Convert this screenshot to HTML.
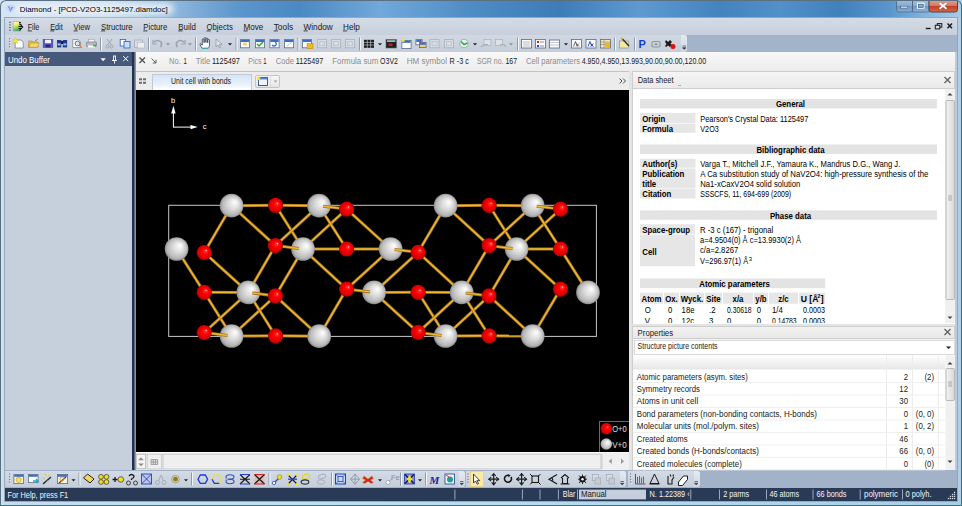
<!DOCTYPE html>
<html><head><meta charset="utf-8">
<style>
*{margin:0;padding:0;box-sizing:border-box}
html,body{width:962px;height:506px;overflow:hidden;background:#c4d8ec;font-family:"Liberation Sans",sans-serif;font-size:9px;color:#000;position:relative}
.a{position:absolute}
#frame{left:0;top:0;width:962px;height:506px;background:linear-gradient(90deg,#cfe0f0 0,#c2d7ec 40%,#b4cde6 100%)}
#fbot{left:0;top:500px;width:962px;height:6px;background:linear-gradient(90deg,#c6dcef,#bfe0f0 30%,#b4d8ec 70%,#a6cfe6)}
#fborder{left:0;top:0;width:962px;height:506px;border:1px solid #5a7080;border-radius:6px 6px 0 0;border-right-color:#3a7080;border-bottom-color:#3a7080}
#title{left:0;top:0;width:962px;height:18px;background:linear-gradient(90deg,#d6e5f3 0,#cadcee 110px,#8ab4dc 180px,#5b95cb 240px,#4a89c2 300px,#72a8da 380px,#4f8cc4 470px,#3d7cb8 560px,#5e9ad0 640px,#4383bf 720px,#5290c8 780px,#4080bc 840px,#5a96cc 890px,#88b8e0 930px,#a8cce8 962px)}
#titletop{left:0;top:0;width:962px;height:1px;background:#5a6a7a}
#client{left:4px;top:17px;width:954px;height:485px;background:#95a5ba}
#menubar{left:5px;top:18px;width:952px;height:17px;background:linear-gradient(#d3dbe6,#c6cfdb)}
#tbrow{left:5px;top:35px;width:952px;height:17px;background:#a3b3c9}
#tb1{left:5px;top:35px;width:682px;height:17px;background:linear-gradient(#d2d9e3,#c4cdd9);border-radius:0 3px 3px 0}
#tb1end{left:681px;top:35px;width:6px;height:17px;background:linear-gradient(#e6ebf2,#cdd6e1);border-radius:0 3px 3px 0}
#undoh{left:5px;top:52px;width:127px;height:14px;background:#46597a}
#undob{left:5px;top:66px;width:127px;height:404px;background:#c6d0dd}
#split1{left:132px;top:52px;width:4px;height:418px;background:linear-gradient(90deg,#223050 0,#243252 50%,#5a6880 62%,#a4a8b2 100%)}
#info{left:136px;top:52px;width:821px;height:20px;background:linear-gradient(#f8f8f8,#ececec);border-bottom:1px solid #c4c4c4}
#tabbar{left:136px;top:72px;width:493px;height:18px;background:#ececec}
#tab{left:151.5px;top:73.5px;width:100px;height:16.5px;background:linear-gradient(#d3e4f8,#e8f1fb 60%,#ffffff);border:1px solid #c0cad8;border-bottom:none}
#tab2{left:255px;top:74.5px;width:25px;height:13.5px;background:linear-gradient(#f6f6f6,#e6e6e6);border:1px solid #c4c4c4;border-radius:2px}
#canvas{left:136px;top:90px;width:493px;height:362px;background:#000;overflow:hidden}
#hscroll{left:136px;top:452px;width:493px;height:18px;background:#f0f0f0;border-top:1px solid #fafafa}
#split2{left:629px;top:71px;width:3px;height:399px;background:#e4e4e4}
#dsh{left:632px;top:71px;width:323px;height:18px;background:linear-gradient(#f5f5f5,#eaeaea);border:1px solid #cdcdcd}
#dsc{left:632px;top:89px;width:323px;height:235px;background:#fff;border-left:1px solid #cdcdcd}
#dsscroll{left:945px;top:89px;width:10px;height:234px;background:#f2f2f2}
#propsep{left:632px;top:324px;width:323px;height:2px;background:#e4e4e4}
#proph{left:632px;top:326px;width:323px;height:13px;background:linear-gradient(#f2f2f2,#e8e8e8);border:1px solid #cdcdcd}
#propdd{left:632px;top:339px;width:323px;height:16px;background:#f4f4f4;border-left:1px solid #cdcdcd}
#propddbox{left:634px;top:339.5px;width:321px;height:15px;background:#fff;border:1px solid #dadada}
#proptab{left:632px;top:355px;width:323px;height:115px;background:#fff;border-left:1px solid #cdcdcd}
#rightedge{left:955px;top:52px;width:2px;height:418px;background:#b8cde2}
#btbrow{left:5px;top:470px;width:952px;height:18px;background:#a2b2c8}
.tbar{background:linear-gradient(#d4dbe5,#c4cdd9);border-radius:0 3px 3px 0}
.tend{background:linear-gradient(#e6ebf2,#cdd6e1);border-radius:0 3px 3px 0}
#btb1{left:5px;top:470.5px;width:459.5px;height:16.5px}
#btb1e{left:458.5px;top:470.5px;width:6px;height:16.5px}
#btb4{left:466px;top:470.5px;width:159.5px;height:16.5px}
#btb4e{left:619.5px;top:470.5px;width:6px;height:16.5px}
#btb5{left:628px;top:470.5px;width:72px;height:16.5px}
#btb5e{left:694px;top:470.5px;width:6px;height:16.5px}
#status{left:5px;top:488px;width:952px;height:13px;background:#293a57}
</style></head><body>
<div class="a" id="frame"></div><div class="a" id="fbot"></div>
<div class="a" id="title"></div>
<div class="a" id="client"></div>
<div class="a" id="menubar"></div>
<div class="a" id="tbrow"></div>
<div class="a" id="tb1"></div>
<div class="a" id="tb1end"></div>
<div class="a" id="undoh"></div>
<div class="a" id="undob"></div>
<div class="a" id="split1"></div>
<div class="a" id="info"></div>
<div class="a" id="tabbar"></div>
<div class="a" id="tab"></div>
<div class="a" id="tab2"></div>
<div class="a" id="canvas"><svg class="a" style="left:0;top:0" width="493" height="362" viewBox="0 0 493 362">
<defs><radialGradient id="gv" cx="0.5" cy="0.5" r="0.5" fx="0.66" fy="0.34"><stop offset="0" stop-color="#ffffff"/><stop offset="0.15" stop-color="#f4f4f4"/><stop offset="0.5" stop-color="#d8d8d8"/><stop offset="0.85" stop-color="#b6b6b6"/><stop offset="1" stop-color="#888888"/></radialGradient>
<radialGradient id="go" cx="0.5" cy="0.5" r="0.5" fx="0.64" fy="0.36"><stop offset="0" stop-color="#ffc8c8"/><stop offset="0.14" stop-color="#ff3030"/><stop offset="0.4" stop-color="#ff0000"/><stop offset="0.85" stop-color="#d80000"/><stop offset="1" stop-color="#980000"/></radialGradient></defs>
<rect x="32.7" y="115.3" width="427.7" height="131.1" fill="none" stroke="#c8c8c8" stroke-width="1"/>
<line x1="40.6" y1="159.0" x2="68.2" y2="202.3" stroke="#a87418" stroke-width="3.0"/><line x1="40.6" y1="159.0" x2="68.2" y2="202.3" stroke="#eeba36" stroke-width="1.4"/>
<line x1="68.2" y1="162.5" x2="95.6" y2="115.7" stroke="#a87418" stroke-width="3.0"/><line x1="68.2" y1="162.5" x2="95.6" y2="115.7" stroke="#eeba36" stroke-width="1.4"/>
<line x1="68.2" y1="162.5" x2="112.3" y2="202.4" stroke="#a87418" stroke-width="3.0"/><line x1="68.2" y1="162.5" x2="112.3" y2="202.4" stroke="#eeba36" stroke-width="1.4"/>
<line x1="95.6" y1="115.7" x2="139.5" y2="115.3" stroke="#a87418" stroke-width="3.0"/><line x1="95.6" y1="115.7" x2="139.5" y2="115.3" stroke="#eeba36" stroke-width="1.4"/>
<line x1="95.6" y1="115.7" x2="139.4" y2="155.6" stroke="#a87418" stroke-width="3.0"/><line x1="95.6" y1="115.7" x2="139.4" y2="155.6" stroke="#eeba36" stroke-width="1.4"/>
<line x1="139.5" y1="115.3" x2="167.0" y2="159.0" stroke="#a87418" stroke-width="3.0"/><line x1="139.5" y1="115.3" x2="167.0" y2="159.0" stroke="#eeba36" stroke-width="1.4"/>
<line x1="139.5" y1="115.3" x2="183.0" y2="115.7" stroke="#a87418" stroke-width="3.0"/><line x1="139.5" y1="115.3" x2="183.0" y2="115.7" stroke="#eeba36" stroke-width="1.4"/>
<line x1="183.0" y1="115.7" x2="139.4" y2="155.6" stroke="#a87418" stroke-width="3.0"/><line x1="183.0" y1="115.7" x2="139.4" y2="155.6" stroke="#eeba36" stroke-width="1.4"/>
<line x1="139.4" y1="155.6" x2="112.3" y2="202.4" stroke="#a87418" stroke-width="3.0"/><line x1="139.4" y1="155.6" x2="112.3" y2="202.4" stroke="#eeba36" stroke-width="1.4"/>
<line x1="167.0" y1="159.0" x2="139.4" y2="205.9" stroke="#a87418" stroke-width="3.0"/><line x1="167.0" y1="159.0" x2="139.4" y2="205.9" stroke="#eeba36" stroke-width="1.4"/>
<line x1="167.0" y1="159.0" x2="210.6" y2="159.0" stroke="#a87418" stroke-width="3.0"/><line x1="167.0" y1="159.0" x2="210.6" y2="159.0" stroke="#eeba36" stroke-width="1.4"/>
<line x1="167.0" y1="159.0" x2="210.6" y2="119.1" stroke="#a87418" stroke-width="3.0"/><line x1="167.0" y1="159.0" x2="210.6" y2="119.1" stroke="#eeba36" stroke-width="1.4"/>
<line x1="167.0" y1="159.0" x2="210.6" y2="199.1" stroke="#a87418" stroke-width="3.0"/><line x1="167.0" y1="159.0" x2="210.6" y2="199.1" stroke="#eeba36" stroke-width="1.4"/>
<line x1="68.2" y1="202.3" x2="112.3" y2="202.4" stroke="#a87418" stroke-width="3.0"/><line x1="68.2" y1="202.3" x2="112.3" y2="202.4" stroke="#eeba36" stroke-width="1.4"/>
<line x1="68.2" y1="202.3" x2="95.6" y2="246.0" stroke="#a87418" stroke-width="3.0"/><line x1="68.2" y1="202.3" x2="95.6" y2="246.0" stroke="#eeba36" stroke-width="1.4"/>
<line x1="112.3" y1="202.4" x2="68.2" y2="242.5" stroke="#a87418" stroke-width="3.0"/><line x1="112.3" y1="202.4" x2="68.2" y2="242.5" stroke="#eeba36" stroke-width="1.4"/>
<line x1="139.4" y1="205.9" x2="95.6" y2="246.0" stroke="#a87418" stroke-width="3.0"/><line x1="139.4" y1="205.9" x2="95.6" y2="246.0" stroke="#eeba36" stroke-width="1.4"/>
<line x1="112.3" y1="202.4" x2="139.5" y2="245.8" stroke="#a87418" stroke-width="3.0"/><line x1="112.3" y1="202.4" x2="139.5" y2="245.8" stroke="#eeba36" stroke-width="1.4"/>
<line x1="139.4" y1="205.9" x2="183.2" y2="246.2" stroke="#a87418" stroke-width="3.0"/><line x1="139.4" y1="205.9" x2="183.2" y2="246.2" stroke="#eeba36" stroke-width="1.4"/>
<line x1="95.6" y1="246.0" x2="139.5" y2="245.8" stroke="#a87418" stroke-width="3.0"/><line x1="95.6" y1="246.0" x2="139.5" y2="245.8" stroke="#eeba36" stroke-width="1.4"/>
<line x1="139.5" y1="245.8" x2="183.2" y2="246.2" stroke="#a87418" stroke-width="3.0"/><line x1="139.5" y1="245.8" x2="183.2" y2="246.2" stroke="#eeba36" stroke-width="1.4"/>
<line x1="183.0" y1="115.7" x2="210.6" y2="159.0" stroke="#a87418" stroke-width="3.0"/><line x1="183.0" y1="115.7" x2="210.6" y2="159.0" stroke="#eeba36" stroke-width="1.4"/>
<line x1="210.6" y1="159.0" x2="254.6" y2="159.0" stroke="#a87418" stroke-width="3.0"/><line x1="210.6" y1="159.0" x2="254.6" y2="159.0" stroke="#eeba36" stroke-width="1.4"/>
<line x1="210.6" y1="119.1" x2="254.6" y2="159.0" stroke="#a87418" stroke-width="3.0"/><line x1="210.6" y1="119.1" x2="254.6" y2="159.0" stroke="#eeba36" stroke-width="1.4"/>
<line x1="282.1" y1="162.3" x2="309.6" y2="115.7" stroke="#a87418" stroke-width="3.0"/><line x1="282.1" y1="162.3" x2="309.6" y2="115.7" stroke="#eeba36" stroke-width="1.4"/>
<line x1="254.6" y1="159.0" x2="210.6" y2="199.1" stroke="#a87418" stroke-width="3.0"/><line x1="254.6" y1="159.0" x2="210.6" y2="199.1" stroke="#eeba36" stroke-width="1.4"/>
<line x1="282.1" y1="162.3" x2="238.1" y2="202.4" stroke="#a87418" stroke-width="3.0"/><line x1="282.1" y1="162.3" x2="238.1" y2="202.4" stroke="#eeba36" stroke-width="1.4"/>
<line x1="282.1" y1="162.3" x2="325.7" y2="202.4" stroke="#a87418" stroke-width="3.0"/><line x1="282.1" y1="162.3" x2="325.7" y2="202.4" stroke="#eeba36" stroke-width="1.4"/>
<line x1="238.1" y1="202.4" x2="282.1" y2="202.3" stroke="#a87418" stroke-width="3.0"/><line x1="238.1" y1="202.4" x2="282.1" y2="202.3" stroke="#eeba36" stroke-width="1.4"/>
<line x1="282.1" y1="202.3" x2="325.7" y2="202.4" stroke="#a87418" stroke-width="3.0"/><line x1="282.1" y1="202.3" x2="325.7" y2="202.4" stroke="#eeba36" stroke-width="1.4"/>
<line x1="210.6" y1="199.1" x2="183.2" y2="246.2" stroke="#a87418" stroke-width="3.0"/><line x1="210.6" y1="199.1" x2="183.2" y2="246.2" stroke="#eeba36" stroke-width="1.4"/>
<line x1="238.1" y1="202.4" x2="282.1" y2="242.4" stroke="#a87418" stroke-width="3.0"/><line x1="238.1" y1="202.4" x2="282.1" y2="242.4" stroke="#eeba36" stroke-width="1.4"/>
<line x1="282.1" y1="202.3" x2="309.6" y2="246.0" stroke="#a87418" stroke-width="3.0"/><line x1="282.1" y1="202.3" x2="309.6" y2="246.0" stroke="#eeba36" stroke-width="1.4"/>
<line x1="325.7" y1="202.4" x2="282.1" y2="242.4" stroke="#a87418" stroke-width="3.0"/><line x1="325.7" y1="202.4" x2="282.1" y2="242.4" stroke="#eeba36" stroke-width="1.4"/>
<line x1="309.6" y1="115.7" x2="353.1" y2="115.3" stroke="#a87418" stroke-width="3.0"/><line x1="309.6" y1="115.7" x2="353.1" y2="115.3" stroke="#eeba36" stroke-width="1.4"/>
<line x1="309.6" y1="115.7" x2="353.1" y2="155.6" stroke="#a87418" stroke-width="3.0"/><line x1="309.6" y1="115.7" x2="353.1" y2="155.6" stroke="#eeba36" stroke-width="1.4"/>
<line x1="353.1" y1="115.3" x2="380.6" y2="159.0" stroke="#a87418" stroke-width="3.0"/><line x1="353.1" y1="115.3" x2="380.6" y2="159.0" stroke="#eeba36" stroke-width="1.4"/>
<line x1="353.1" y1="115.3" x2="396.7" y2="115.7" stroke="#a87418" stroke-width="3.0"/><line x1="353.1" y1="115.3" x2="396.7" y2="115.7" stroke="#eeba36" stroke-width="1.4"/>
<line x1="396.7" y1="115.7" x2="353.1" y2="155.6" stroke="#a87418" stroke-width="3.0"/><line x1="396.7" y1="115.7" x2="353.1" y2="155.6" stroke="#eeba36" stroke-width="1.4"/>
<line x1="353.1" y1="155.6" x2="325.7" y2="202.4" stroke="#a87418" stroke-width="3.0"/><line x1="353.1" y1="155.6" x2="325.7" y2="202.4" stroke="#eeba36" stroke-width="1.4"/>
<line x1="380.6" y1="159.0" x2="353.1" y2="205.9" stroke="#a87418" stroke-width="3.0"/><line x1="380.6" y1="159.0" x2="353.1" y2="205.9" stroke="#eeba36" stroke-width="1.4"/>
<line x1="380.6" y1="159.0" x2="424.5" y2="159.0" stroke="#a87418" stroke-width="3.0"/><line x1="380.6" y1="159.0" x2="424.5" y2="159.0" stroke="#eeba36" stroke-width="1.4"/>
<line x1="380.6" y1="159.0" x2="424.5" y2="119.1" stroke="#a87418" stroke-width="3.0"/><line x1="380.6" y1="159.0" x2="424.5" y2="119.1" stroke="#eeba36" stroke-width="1.4"/>
<line x1="380.6" y1="159.0" x2="424.5" y2="199.1" stroke="#a87418" stroke-width="3.0"/><line x1="380.6" y1="159.0" x2="424.5" y2="199.1" stroke="#eeba36" stroke-width="1.4"/>
<line x1="353.1" y1="205.9" x2="309.6" y2="246.0" stroke="#a87418" stroke-width="3.0"/><line x1="353.1" y1="205.9" x2="309.6" y2="246.0" stroke="#eeba36" stroke-width="1.4"/>
<line x1="325.7" y1="202.4" x2="353.1" y2="245.8" stroke="#a87418" stroke-width="3.0"/><line x1="325.7" y1="202.4" x2="353.1" y2="245.8" stroke="#eeba36" stroke-width="1.4"/>
<line x1="353.1" y1="205.9" x2="396.7" y2="246.0" stroke="#a87418" stroke-width="3.0"/><line x1="353.1" y1="205.9" x2="396.7" y2="246.0" stroke="#eeba36" stroke-width="1.4"/>
<line x1="309.6" y1="246.0" x2="353.1" y2="245.8" stroke="#a87418" stroke-width="3.0"/><line x1="309.6" y1="246.0" x2="353.1" y2="245.8" stroke="#eeba36" stroke-width="1.4"/>
<line x1="353.1" y1="245.8" x2="396.7" y2="246.0" stroke="#a87418" stroke-width="3.0"/><line x1="353.1" y1="245.8" x2="396.7" y2="246.0" stroke="#eeba36" stroke-width="1.4"/>
<line x1="396.7" y1="115.7" x2="424.5" y2="159.0" stroke="#a87418" stroke-width="3.0"/><line x1="396.7" y1="115.7" x2="424.5" y2="159.0" stroke="#eeba36" stroke-width="1.4"/>
<line x1="424.5" y1="199.1" x2="396.7" y2="246.0" stroke="#a87418" stroke-width="3.0"/><line x1="424.5" y1="199.1" x2="396.7" y2="246.0" stroke="#eeba36" stroke-width="1.4"/>
<line x1="424.5" y1="159.0" x2="452.0" y2="202.4" stroke="#a87418" stroke-width="3.0"/><line x1="424.5" y1="159.0" x2="452.0" y2="202.4" stroke="#eeba36" stroke-width="1.4"/>
<circle cx="40.6" cy="159.0" r="11.85" fill="url(#gv)"/>
<circle cx="95.6" cy="115.7" r="11.85" fill="url(#gv)"/>
<circle cx="95.6" cy="246.0" r="11.85" fill="url(#gv)"/>
<circle cx="112.3" cy="202.4" r="11.85" fill="url(#gv)"/>
<circle cx="167.0" cy="159.0" r="11.85" fill="url(#gv)"/>
<circle cx="183.0" cy="115.7" r="11.85" fill="url(#gv)"/>
<circle cx="183.2" cy="246.2" r="11.85" fill="url(#gv)"/>
<circle cx="238.1" cy="202.4" r="11.85" fill="url(#gv)"/>
<circle cx="254.6" cy="159.0" r="11.85" fill="url(#gv)"/>
<circle cx="309.6" cy="115.7" r="11.85" fill="url(#gv)"/>
<circle cx="309.6" cy="246.0" r="11.85" fill="url(#gv)"/>
<circle cx="325.7" cy="202.4" r="11.85" fill="url(#gv)"/>
<circle cx="380.6" cy="159.0" r="11.85" fill="url(#gv)"/>
<circle cx="396.7" cy="115.7" r="11.85" fill="url(#gv)"/>
<circle cx="396.7" cy="246.0" r="11.85" fill="url(#gv)"/>
<circle cx="452.0" cy="202.4" r="11.85" fill="url(#gv)"/>
<line x1="139.4" y1="155.6" x2="163.0" y2="158.5" stroke="#a87418" stroke-width="3.0"/><line x1="139.4" y1="155.6" x2="163.0" y2="158.5" stroke="#eeba36" stroke-width="1.4"/>
<line x1="139.4" y1="205.9" x2="116.3" y2="202.9" stroke="#a87418" stroke-width="3.0"/><line x1="139.4" y1="205.9" x2="116.3" y2="202.9" stroke="#eeba36" stroke-width="1.4"/>
<line x1="68.2" y1="242.5" x2="91.6" y2="245.5" stroke="#a87418" stroke-width="3.0"/><line x1="68.2" y1="242.5" x2="91.6" y2="245.5" stroke="#eeba36" stroke-width="1.4"/>
<line x1="210.6" y1="119.1" x2="187.0" y2="116.2" stroke="#a87418" stroke-width="3.0"/><line x1="210.6" y1="119.1" x2="187.0" y2="116.2" stroke="#eeba36" stroke-width="1.4"/>
<line x1="282.1" y1="162.3" x2="258.6" y2="159.5" stroke="#a87418" stroke-width="3.0"/><line x1="282.1" y1="162.3" x2="258.6" y2="159.5" stroke="#eeba36" stroke-width="1.4"/>
<line x1="210.6" y1="199.1" x2="234.1" y2="201.9" stroke="#a87418" stroke-width="3.0"/><line x1="210.6" y1="199.1" x2="234.1" y2="201.9" stroke="#eeba36" stroke-width="1.4"/>
<line x1="282.1" y1="242.4" x2="305.6" y2="245.5" stroke="#a87418" stroke-width="3.0"/><line x1="282.1" y1="242.4" x2="305.6" y2="245.5" stroke="#eeba36" stroke-width="1.4"/>
<line x1="353.1" y1="155.6" x2="376.6" y2="158.5" stroke="#a87418" stroke-width="3.0"/><line x1="353.1" y1="155.6" x2="376.6" y2="158.5" stroke="#eeba36" stroke-width="1.4"/>
<line x1="353.1" y1="205.9" x2="329.7" y2="202.9" stroke="#a87418" stroke-width="3.0"/><line x1="353.1" y1="205.9" x2="329.7" y2="202.9" stroke="#eeba36" stroke-width="1.4"/>
<line x1="424.5" y1="119.1" x2="400.7" y2="116.2" stroke="#a87418" stroke-width="3.0"/><line x1="424.5" y1="119.1" x2="400.7" y2="116.2" stroke="#eeba36" stroke-width="1.4"/>
<circle cx="68.2" cy="162.5" r="7.6" fill="url(#go)"/>
<circle cx="68.2" cy="202.3" r="7.6" fill="url(#go)"/>
<circle cx="68.2" cy="242.5" r="7.6" fill="url(#go)"/>
<circle cx="139.5" cy="115.3" r="7.6" fill="url(#go)"/>
<circle cx="139.4" cy="155.6" r="7.6" fill="url(#go)"/>
<circle cx="139.4" cy="205.9" r="7.6" fill="url(#go)"/>
<circle cx="139.5" cy="245.8" r="7.6" fill="url(#go)"/>
<circle cx="210.6" cy="119.1" r="7.6" fill="url(#go)"/>
<circle cx="210.6" cy="159.0" r="7.6" fill="url(#go)"/>
<circle cx="210.6" cy="199.1" r="7.6" fill="url(#go)"/>
<circle cx="282.1" cy="162.3" r="7.6" fill="url(#go)"/>
<circle cx="282.1" cy="202.3" r="7.6" fill="url(#go)"/>
<circle cx="282.1" cy="242.4" r="7.6" fill="url(#go)"/>
<circle cx="353.1" cy="115.3" r="7.6" fill="url(#go)"/>
<circle cx="353.1" cy="155.6" r="7.6" fill="url(#go)"/>
<circle cx="353.1" cy="205.9" r="7.6" fill="url(#go)"/>
<circle cx="353.1" cy="245.8" r="7.6" fill="url(#go)"/>
<circle cx="424.5" cy="119.1" r="7.6" fill="url(#go)"/>
<circle cx="424.5" cy="159.0" r="7.6" fill="url(#go)"/>
<circle cx="424.5" cy="199.1" r="7.6" fill="url(#go)"/>
<g fill="#fff" stroke="#fff">
<line x1="37.4" y1="37.5" x2="37.4" y2="21" stroke-width="1"/><path d="M35.2 23.5 L37.4 15.8 L39.6 23.5 Z" stroke="none"/>
<line x1="37.4" y1="37.1" x2="56" y2="37.1" stroke-width="1"/><path d="M54.5 34.9 L61.7 37.1 L54.5 39.3 Z" stroke="none"/>
</g>
<text x="35" y="13" fill="#fff" font-size="7.5" font-family="Liberation Sans">b</text>
<text x="66.8" y="39.4" fill="#fff" font-size="7.5" font-family="Liberation Sans">c</text>
<rect x="463.5" y="331.5" width="30" height="31" fill="#000" stroke="#6a6a6a" stroke-width="1"/>
<circle cx="470.3" cy="338.6" r="5.8" fill="url(#go)"/>
<circle cx="470.3" cy="354" r="5.8" fill="url(#gv)"/>
<text x="476.2" y="342" fill="#e0e0e0" font-size="8.5" textLength="14.5" lengthAdjust="spacingAndGlyphs" font-family="Liberation Sans">O+0</text>
<text x="476.2" y="357.5" fill="#e0e0e0" font-size="8.5" textLength="14.5" lengthAdjust="spacingAndGlyphs" font-family="Liberation Sans">V+0</text>
</svg></div>
<div class="a" id="hscroll"></div>
<div class="a" id="split2"></div>
<div class="a" id="dsh"></div>
<div class="a" id="dsc"></div>
<div class="a" id="dsscroll"></div>
<div class="a" id="propsep"></div>
<div class="a" id="proph"></div>
<div class="a" id="propdd"></div>
<div class="a" id="propddbox"></div>
<div class="a" id="proptab"></div>
<div class="a" id="rightedge"></div>
<div class="a" id="btbrow"></div>
<div class="a tbar" id="btb1"></div><div class="a tend" id="btb1e"></div>
<div class="a tbar" id="btb4"></div><div class="a tend" id="btb4e"></div>
<div class="a tbar" id="btb5"></div><div class="a tend" id="btb5e"></div>
<div class="a" id="status"></div>
<svg class="a" style="left:0;top:0" width="962" height="506" viewBox="0 0 962 506" font-family="Liberation Sans">
<defs><filter id="glow" x="-20%" y="-50%" width="140%" height="200%"><feGaussianBlur stdDeviation="3"/></filter></defs>
<rect x="14.0" y="3.0" width="160.0" height="12.0" fill="#e8f1fa" rx="6" filter="url(#glow)" opacity="0.9"/>
<text x="19.7" y="11.6" font-size="8" fill="#000" textLength="148.0" lengthAdjust="spacingAndGlyphs">Diamond - [PCD-V2O3-1125497.diamdoc]</text>
<path d="M5 7.5 L8 5 L13 5 L16 7.5 L10.5 13 Z" fill="#c4d4fa" stroke="none" stroke-width="1" opacity="0.85"/>
<path d="M7.8 6.5 L10 10 L9.5 6.5 Z M10.5 10.5 L13.5 7 L11 7.5 Z" fill="#5a78e0" stroke="none" stroke-width="1" />
<path d="M9.5 9 L10.5 11.5 L11.5 8.5" fill="none" stroke="#7a98f0" stroke-width="0.9" />
<g>
<rect x="896.5" y="-1.0" width="16.0" height="13.0" fill="url(#cbtn)" rx="2.5" stroke="#4a5e78" stroke-width="0.9" opacity="0.75"/>
<rect x="912.5" y="-1.0" width="16.5" height="13.0" fill="url(#cbtn)" stroke="#4a5e78" stroke-width="0.9" opacity="0.75"/>
<rect x="929.0" y="-1.0" width="28.5" height="13.0" fill="url(#cclose)" rx="2.5" stroke="#4a3a3a" stroke-width="0.9"/>
<rect x="900.5" y="6.2" width="7.0" height="1.8" fill="#f4f6fa" stroke="#3a4a60" stroke-width="0.5"/>
<rect x="917.5" y="3.2" width="6.5" height="5.0" fill="none" stroke="#f4f6fa" stroke-width="1.1"/>
<rect x="918.3" y="4.5" width="4.9" height="2.8" fill="none" stroke="#3a4a60" stroke-width="0.5"/>
<path d="M939.5 3 L946.5 8.8 M946.5 3 L939.5 8.8" fill="none" stroke="#3a2a2a" stroke-width="2.8" opacity="0.35"/>
<path d="M939.5 3 L946.5 8.8 M946.5 3 L939.5 8.8" fill="none" stroke="#fff" stroke-width="1.9" />
</g>
<defs><linearGradient id="cbtn" x1="0" y1="0" x2="0" y2="1"><stop offset="0" stop-color="#b4cce4"/><stop offset="0.5" stop-color="#90b0d2"/><stop offset="0.52" stop-color="#6890bc"/><stop offset="1" stop-color="#8cb4dc"/></linearGradient>
<linearGradient id="cclose" x1="0" y1="0" x2="0" y2="1"><stop offset="0" stop-color="#e4a898"/><stop offset="0.5" stop-color="#d47868"/><stop offset="0.52" stop-color="#c23a22"/><stop offset="1" stop-color="#d66a48"/></linearGradient></defs>
<text x="27.7" y="30.0" font-size="8.64" fill="#1a1a1a" textLength="11.6" lengthAdjust="spacingAndGlyphs">File</text>
<line x1="27.7" y1="30.9" x2="31.9" y2="30.9" stroke="#1a1a1a" stroke-width="0.8" />
<text x="50.2" y="30.0" font-size="8.64" fill="#1a1a1a" textLength="12.5" lengthAdjust="spacingAndGlyphs">Edit</text>
<line x1="50.2" y1="30.9" x2="54.4" y2="30.9" stroke="#1a1a1a" stroke-width="0.8" />
<text x="73.6" y="30.0" font-size="8.64" fill="#1a1a1a" textLength="16.3" lengthAdjust="spacingAndGlyphs">View</text>
<line x1="73.6" y1="30.9" x2="77.8" y2="30.9" stroke="#1a1a1a" stroke-width="0.8" />
<text x="101.0" y="30.0" font-size="8.64" fill="#1a1a1a" textLength="31.6" lengthAdjust="spacingAndGlyphs">Structure</text>
<line x1="101.0" y1="30.9" x2="105.2" y2="30.9" stroke="#1a1a1a" stroke-width="0.8" />
<text x="143.3" y="30.0" font-size="8.64" fill="#1a1a1a" textLength="23.9" lengthAdjust="spacingAndGlyphs">Picture</text>
<line x1="143.3" y1="30.9" x2="147.5" y2="30.9" stroke="#1a1a1a" stroke-width="0.8" />
<text x="178.3" y="30.0" font-size="8.64" fill="#1a1a1a" textLength="17.6" lengthAdjust="spacingAndGlyphs">Build</text>
<line x1="178.3" y1="30.9" x2="182.5" y2="30.9" stroke="#1a1a1a" stroke-width="0.8" />
<text x="206.5" y="30.0" font-size="8.64" fill="#1a1a1a" textLength="26.3" lengthAdjust="spacingAndGlyphs">Objects</text>
<line x1="206.5" y1="30.9" x2="210.7" y2="30.9" stroke="#1a1a1a" stroke-width="0.8" />
<text x="243.5" y="30.0" font-size="8.64" fill="#1a1a1a" textLength="19.9" lengthAdjust="spacingAndGlyphs">Move</text>
<line x1="243.5" y1="30.9" x2="247.7" y2="30.9" stroke="#1a1a1a" stroke-width="0.8" />
<text x="273.7" y="30.0" font-size="8.64" fill="#1a1a1a" textLength="19.5" lengthAdjust="spacingAndGlyphs">Tools</text>
<line x1="273.7" y1="30.9" x2="277.9" y2="30.9" stroke="#1a1a1a" stroke-width="0.8" />
<text x="303.5" y="30.0" font-size="8.64" fill="#1a1a1a" textLength="29.3" lengthAdjust="spacingAndGlyphs">Window</text>
<line x1="303.5" y1="30.9" x2="307.7" y2="30.9" stroke="#1a1a1a" stroke-width="0.8" />
<text x="343.0" y="30.0" font-size="8.64" fill="#1a1a1a" textLength="16.8" lengthAdjust="spacingAndGlyphs">Help</text>
<line x1="343.0" y1="30.9" x2="347.2" y2="30.9" stroke="#1a1a1a" stroke-width="0.8" />
<rect x="9.1" y="21.8" width="1.7" height="1.1" fill="#5a6a80" />
<rect x="9.1" y="24.4" width="1.7" height="1.1" fill="#5a6a80" />
<rect x="9.1" y="27.0" width="1.7" height="1.1" fill="#5a6a80" />
<rect x="9.1" y="29.7" width="1.7" height="1.1" fill="#5a6a80" />
<defs><linearGradient id="micon" x1="0" y1="0" x2="0.3" y2="1"><stop offset="0" stop-color="#ffffff"/><stop offset="0.45" stop-color="#f0ee50"/><stop offset="1" stop-color="#40b070"/></linearGradient></defs>
<path d="M13.2 21.5 h6 l1.5 1.5 v8 h-7.5 z" fill="url(#micon)" stroke="#8a9080" stroke-width="0.5" />
<path d="M19 22.5 l1.8 0 M19.5 24.5 l1.8 0 M18.5 26.5 l4 0 M18.5 28.5 l3 0" fill="none" stroke="#101810" stroke-width="1.1" />
<path d="M19.5 23.5 l3.2 3.5 l-3.2 3.5" fill="none" stroke="#101810" stroke-width="1.1" />
<rect x="925.8" y="27.8" width="4.8" height="1.4" fill="#1a1a1a" />
<rect x="937.3" y="23.6" width="4.5" height="3.6" fill="none" stroke="#1a1a1a" stroke-width="1"/>
<rect x="935.3" y="25.3" width="4.5" height="3.6" fill="#d6dde8" stroke="#1a1a1a" stroke-width="1"/>
<path d="M947.5 23.5 L952 28.3 M952 23.5 L947.5 28.3" fill="none" stroke="#1a1a1a" stroke-width="1.4" />
<text x="8.0" y="62.6" font-size="8.64" fill="#fff" textLength="42.0" lengthAdjust="spacingAndGlyphs">Undo Buffer</text>
<path d="M100.5 58.2 L105.8 58.2 L103.15 61.2 Z" fill="#fff" stroke="none" stroke-width="1" />
<path d="M113 56 L116 56 M113.5 56 L113.5 60.5 M115.5 56 L115.5 60.5 M112 60.5 L117 60.5 M114.5 60.5 L114.5 63.5" fill="none" stroke="#fff" stroke-width="0.9" />
<path d="M123.2 56.2 L128.2 61.2 M128.2 56.2 L123.2 61.2" fill="none" stroke="#fff" stroke-width="1" />
<path d="M139.5 57.5 L145 63 M145 57.5 L139.5 63" fill="none" stroke="#505050" stroke-width="1.2" />
<path d="M151.5 58.5 L156 63 M156 59.8 L156 63 L152.8 63" fill="none" stroke="#606060" stroke-width="1" />
<text x="169.1" y="63.6" font-size="8.86" fill="#8c8c8c" textLength="11.7" lengthAdjust="spacingAndGlyphs">No.</text>
<text x="183.4" y="63.6" font-size="8.86" fill="#202020" textLength="3.3" lengthAdjust="spacingAndGlyphs">1</text>
<text x="195.7" y="63.6" font-size="8.86" fill="#8c8c8c" textLength="14.6" lengthAdjust="spacingAndGlyphs">Title</text>
<text x="212.0" y="63.6" font-size="8.86" fill="#202020" textLength="27.9" lengthAdjust="spacingAndGlyphs">1125497</text>
<text x="248.3" y="63.6" font-size="8.86" fill="#8c8c8c" textLength="13.3" lengthAdjust="spacingAndGlyphs">Pics</text>
<text x="263.3" y="63.6" font-size="8.86" fill="#202020" textLength="3.3" lengthAdjust="spacingAndGlyphs">1</text>
<text x="275.8" y="63.6" font-size="8.86" fill="#8c8c8c" textLength="18.2" lengthAdjust="spacingAndGlyphs">Code</text>
<text x="295.8" y="63.6" font-size="8.86" fill="#202020" textLength="27.4" lengthAdjust="spacingAndGlyphs">1125497</text>
<text x="332.3" y="63.6" font-size="8.86" fill="#8c8c8c" textLength="46.0" lengthAdjust="spacingAndGlyphs">Formula sum</text>
<text x="380.0" y="63.6" font-size="8.86" fill="#202020" textLength="18.0" lengthAdjust="spacingAndGlyphs">O3V2</text>
<text x="406.8" y="63.6" font-size="8.86" fill="#8c8c8c" textLength="40.2" lengthAdjust="spacingAndGlyphs">HM symbol</text>
<text x="449.6" y="63.6" font-size="8.86" fill="#202020" textLength="19.2" lengthAdjust="spacingAndGlyphs">R -3 c</text>
<text x="476.9" y="63.6" font-size="8.86" fill="#8c8c8c" textLength="26.5" lengthAdjust="spacingAndGlyphs">SGR no.</text>
<text x="505.5" y="63.6" font-size="8.86" fill="#202020" textLength="11.6" lengthAdjust="spacingAndGlyphs">167</text>
<text x="526.0" y="63.6" font-size="8.86" fill="#8c8c8c" textLength="54.0" lengthAdjust="spacingAndGlyphs">Cell parameters</text>
<text x="581.7" y="63.6" font-size="8.86" fill="#202020" textLength="124.6" lengthAdjust="spacingAndGlyphs">4.950,4.950,13.993,90.00,90.00,120.00</text>
<rect x="139.0" y="78.3" width="3.0" height="2.0" fill="#6a6e74" />
<rect x="143.0" y="78.3" width="3.0" height="2.0" fill="#6a6e74" />
<rect x="139.0" y="81.8" width="3.0" height="2.0" fill="#6a6e74" />
<rect x="143.0" y="81.8" width="3.0" height="2.0" fill="#6a6e74" />
<text x="171.0" y="84.4" font-size="8.64" fill="#1a1a1a" textLength="60.0" lengthAdjust="spacingAndGlyphs">Unit cell with bonds</text>
<rect x="9.0" y="38.2" width="1.3" height="1.3" fill="#6a7890"/><rect x="9.7" y="38.9" width="1.3" height="1.3" fill="#ffffff" opacity="0.6"/><rect x="9.0" y="40.9" width="1.3" height="1.3" fill="#6a7890"/><rect x="9.7" y="41.6" width="1.3" height="1.3" fill="#ffffff" opacity="0.6"/><rect x="9.0" y="43.6" width="1.3" height="1.3" fill="#6a7890"/><rect x="9.7" y="44.3" width="1.3" height="1.3" fill="#ffffff" opacity="0.6"/><rect x="9.0" y="46.3" width="1.3" height="1.3" fill="#6a7890"/><rect x="9.7" y="47.0" width="1.3" height="1.3" fill="#ffffff" opacity="0.6"/><path d="M15.2 40.0 h6.0 l2 2 v6.0 h-8.0 z" fill="#fff" stroke="#7a8496" stroke-width="0.8"/><path d="M15.5 37.5 l1 2 l2.2 .3 l-1.6 1.5 l.4 2.2 l-2-1 l-2 1 l.4-2.2 l-1.6-1.5 l2.2-.3 z" fill="#f6e43c" stroke="#d8b020" stroke-width="0.4"/><path d="M28.5 41 h3.5 l1 1 h5 v5.3 h-9.5 z" fill="#e4b84c" stroke="#b88a28" stroke-width="0.6"/><path d="M29 47.3 l1.6-4.3 h8.6 l-1.6 4.3 z" fill="#f6d470" stroke="#b88a28" stroke-width="0.5"/><path d="M35 41 l3-2" stroke="#707890" stroke-width="0.8"/><rect x="43.2" y="39.5" width="9.6" height="8" fill="#5a5ccc" stroke="#343aa0" stroke-width="0.6"/><rect x="45" y="39.8" width="6" height="3.4" fill="#f0f0ff"/><rect x="45.5" y="44.6" width="5" height="2.6" fill="#2a2a70"/><rect x="57" y="40" width="4.3" height="7.4" fill="#1e3a8a"/><rect x="62.8" y="40" width="4.3" height="7.4" fill="#1e3a8a"/><rect x="57.6" y="43.4" width="3" height="2" fill="#9ec4f0"/><rect x="63.4" y="43.4" width="3" height="2" fill="#9ec4f0"/><rect x="61" y="41" width="2" height="3" fill="#0e2060"/><path d="M72.8 39.6 h5.5 l2 2 v6.0 h-7.5 z" fill="#fff" stroke="#7a8496" stroke-width="0.8"/><circle cx="77.5" cy="43.5" r="2.4" fill="#d8e4ee" stroke="#606878" stroke-width="0.9"/><path d="M79.2 45.3 l2.6 2.4" stroke="#e08020" stroke-width="1.3"/><rect x="88.5" y="39.2" width="6" height="3" fill="#f4f4f4" stroke="#8a8a8a" stroke-width="0.5"/><rect x="86.5" y="42" width="10" height="4.6" rx="1" fill="#b8bcc2" stroke="#6a7078" stroke-width="0.6"/><rect x="88" y="45.6" width="7" height="1.8" fill="#ffffff"/><rect x="93" y="44.6" width="3" height="1.8" fill="#3cb040"/><rect x="100.0" y="37.5" width="1" height="13.0" fill="#8d9bb0"/><rect x="101.0" y="37.5" width="1" height="13.0" fill="#f4f7fa"/><path d="M107 39 l4.5 6 M112 39 l-4.5 6" stroke="#9aa0a8" stroke-width="0.9"/><circle cx="107.5" cy="46.5" r="1.5" fill="none" stroke="#9aa0a8" stroke-width="0.8"/><circle cx="111.5" cy="46.5" r="1.5" fill="none" stroke="#9aa0a8" stroke-width="0.8"/><rect x="120.2" y="39.5" width="5.5" height="6.5" fill="#fff" stroke="#3060c0" stroke-width="0.8"/><rect x="124" y="41.5" width="6" height="6.5" fill="#c8dcf8" stroke="#3060c0" stroke-width="0.8"/><rect x="134.5" y="40" width="8" height="7.5" fill="#d8dce2" stroke="#a4aab4" stroke-width="0.7"/><rect x="137.5" y="42.5" width="7" height="5.5" fill="#eceef2" stroke="#b0b6c0" stroke-width="0.6"/><rect x="148.0" y="37.5" width="1" height="13.0" fill="#8d9bb0"/><rect x="149.0" y="37.5" width="1" height="13.0" fill="#f4f7fa"/><path d="M154 42 q4-3 7 0 q1.5 2 -0.5 5" fill="none" stroke="#9ca4b0" stroke-width="1.6"/><path d="M153 40 v4 h4" fill="none" stroke="#9ca4b0" stroke-width="1.2"/><path d="M166.0 43.2 h4 l-2 2.2 z" fill="#8a929e"/><path d="M184 42 q-4-3 -7 0 q-1.5 2 0.5 5" fill="none" stroke="#9ca4b0" stroke-width="1.6"/><path d="M185 40 v4 h-4" fill="none" stroke="#9ca4b0" stroke-width="1.2"/><path d="M188.0 43.2 h4 l-2 2.2 z" fill="#8a929e"/><rect x="195.0" y="37.5" width="1" height="13.0" fill="#8d9bb0"/><rect x="196.0" y="37.5" width="1" height="13.0" fill="#f4f7fa"/><path d="M202.5 48.5 q-1.5-1.5 -2.5-4 q-.3-1 .8-.8 l1.5 1.5 v-5.5 q0-.9 .9-.9 q.9 0 .9 .9 v3 v-4.2 q0-.9 .9-.9 q.9 0 .9 .9 v4 v-3.5 q0-.9 .9-.9 q.9 0 .9 .9 v3.8 v-2.6 q0-.9 .9-.9 q.9 0 .9 .9 v5 q0 2.2 -1.6 3.3 z" fill="#ffffff" stroke="#203050" stroke-width="0.75"/><rect x="202.3" y="47.6" width="5.8" height="1.4" fill="#40a8a0"/><path d="M216 39 v8 l2-2 l1.5 3 l1.2-.6 l-1.5-3 h3 z" fill="#e0e4ea" stroke="#8a929e" stroke-width="0.7"/><path d="M228.0 43.2 h4 l-2 2.2 z" fill="#202020"/><rect x="235.6" y="37.5" width="1" height="13.0" fill="#8d9bb0"/><rect x="236.6" y="37.5" width="1" height="13.0" fill="#f4f7fa"/><rect x="240.4" y="39.6" width="9.2" height="8.2" fill="#fff" stroke="#5a6a88" stroke-width="0.8"/><rect x="240.8" y="40.0" width="8.4" height="2" fill="#3a6ec8"/><rect x="243" y="42.5" width="4" height="3" fill="#f0d860"/><rect x="255.4" y="39.6" width="9.2" height="8.2" fill="#fff" stroke="#5a6a88" stroke-width="0.8"/><rect x="255.8" y="40.0" width="8.4" height="2" fill="#3a6ec8"/><path d="M257 44 l2 2 l4-4" stroke="#38a038" stroke-width="1.5" fill="none"/><rect x="269.9" y="39.6" width="9.2" height="8.2" fill="#fff" stroke="#5a6a88" stroke-width="0.8"/><rect x="270.3" y="40.0" width="8.4" height="2" fill="#3a6ec8"/><path d="M272 45 q2 2 4 0 q1-2 -1-3" stroke="#3a70d0" stroke-width="1.3" fill="none"/><rect x="284.4" y="39.6" width="9.2" height="8.2" fill="#fff" stroke="#5a6a88" stroke-width="0.8"/><rect x="284.8" y="40.0" width="8.4" height="2" fill="#3a6ec8"/><path d="M287 46 l5-4" stroke="#a0b0c8" stroke-width="0.8"/><rect x="297.5" y="37.5" width="1" height="13.0" fill="#8d9bb0"/><rect x="298.5" y="37.5" width="1" height="13.0" fill="#f4f7fa"/><rect x="302.4" y="39.6" width="9.2" height="8.2" fill="#fff" stroke="#5a6a88" stroke-width="0.8"/><rect x="302.8" y="40.0" width="8.4" height="2" fill="#3a6ec8"/><rect x="307" y="43.5" width="6" height="5" fill="#f0b820" stroke="#c08000" stroke-width="0.5"/><rect x="317.4" y="39.6" width="9.2" height="8.2" fill="#d8dde4" stroke="#a8b0bc" stroke-width="0.8"/><rect x="319.5" y="41.7" width="5.0" height="4.0" fill="none" stroke="#b8c0ca" stroke-width="0.8"/><rect x="331.4" y="39.6" width="9.2" height="8.2" fill="#d8dde4" stroke="#a8b0bc" stroke-width="0.8"/><rect x="333.5" y="41.7" width="5.0" height="4.0" fill="none" stroke="#b8c0ca" stroke-width="0.8"/><rect x="345.4" y="39.6" width="9.2" height="8.2" fill="#d8dde4" stroke="#a8b0bc" stroke-width="0.8"/><rect x="347.5" y="41.7" width="5.0" height="4.0" fill="none" stroke="#b8c0ca" stroke-width="0.8"/><rect x="359.0" y="37.5" width="1" height="13.0" fill="#8d9bb0"/><rect x="360.0" y="37.5" width="1" height="13.0" fill="#f4f7fa"/><rect x="364" y="39.8" width="10" height="8" fill="#1a1a1a"/><path d="M364 42.4 h10 M364 45 h10 M367.3 39.8 v8 M370.6 39.8 v8" stroke="#d0d8e0" stroke-width="0.6"/><path d="M378.0 43.2 h4 l-2 2.2 z" fill="#202020"/><rect x="386" y="39.5" width="10.5" height="8.5" fill="#202020" stroke="#606878" stroke-width="0.6"/><rect x="387" y="40.3" width="8.5" height="1.6" fill="#c0c8d8"/><rect x="388.5" y="43.5" width="4" height="2.5" fill="#c02020"/><rect x="401.9" y="40.4" width="9.2" height="8.2" fill="#fff" stroke="#5a6a88" stroke-width="0.8"/><rect x="402.3" y="40.8" width="8.4" height="2" fill="#3a6ec8"/><path d="M403 37.5 l.8 1.6 l1.8 .2 l-1.3 1.2 l.3 1.8 l-1.6-.8 l-1.6 .8 l.3-1.8 l-1.3-1.2 l1.8-.2 z" fill="#f6e43c"/><rect x="415.9" y="39.6" width="6.2" height="5.2" fill="#fff" stroke="#5a6a88" stroke-width="0.8"/><rect x="416.3" y="40.0" width="5.4" height="2" fill="#3a6ec8"/><rect x="419.4" y="42.4" width="6.7" height="5.2" fill="#f4d070" stroke="#5a6a88" stroke-width="0.8"/><rect x="419.8" y="42.8" width="5.9" height="2" fill="#3a6ec8"/><rect x="429.9" y="39.6" width="9.2" height="8.2" fill="#d8dde4" stroke="#a8b0bc" stroke-width="0.8"/><rect x="432.0" y="41.7" width="5.0" height="4.0" fill="none" stroke="#b8c0ca" stroke-width="0.8"/><rect x="444.4" y="39.6" width="9.2" height="8.2" fill="#d8dde4" stroke="#a8b0bc" stroke-width="0.8"/><rect x="446.5" y="41.7" width="5.0" height="4.0" fill="none" stroke="#b8c0ca" stroke-width="0.8"/><circle cx="464" cy="43.5" r="4.2" fill="#e8eef4" stroke="#8a9aa8" stroke-width="0.7"/><path d="M461 41.5 l3 3 l3.5-1.5" stroke="#30b030" stroke-width="1.6" fill="none"/><path d="M473.0 43.2 h4 l-2 2.2 z" fill="#202020"/><rect x="484" y="39.5" width="7" height="6" fill="#dde1e6" stroke="#a8b0ba" stroke-width="0.7"/><path d="M481 47 l3-2.5 h4" stroke="#a8b0ba" stroke-width="1.2" fill="none"/><rect x="495.5" y="39.5" width="7" height="6" fill="#dde1e6" stroke="#a8b0ba" stroke-width="0.7"/><path d="M500 44.5 h4 l2 2.5" stroke="#a8b0ba" stroke-width="1.2" fill="none"/><path d="M509.0 43.2 h4 l-2 2.2 z" fill="#8a929e"/><rect x="517.0" y="37.5" width="1" height="13.0" fill="#8d9bb0"/><rect x="518.0" y="37.5" width="1" height="13.0" fill="#f4f7fa"/><rect x="521.5" y="39.5" width="10" height="8.5" fill="#fafafa" stroke="#5a6a88" stroke-width="0.8"/><path d="M523 42 h7 M523 44 h7 M523 46 h7" stroke="#a0a8b8" stroke-width="0.7"/><rect x="535.5" y="39.5" width="10" height="8.5" fill="#fafafa" stroke="#5a6a88" stroke-width="0.8"/><rect x="537" y="41" width="2" height="2" fill="#d02020"/><rect x="537" y="45" width="2" height="2" fill="#2040d0"/><path d="M540 42 h4 M540 46 h4" stroke="#606878" stroke-width="0.7"/><rect x="549.5" y="40" width="10" height="8" fill="#fafafa" stroke="#5a6a88" stroke-width="0.8"/><path d="M550 42.5 h9 M550 45 h9" stroke="#a0a8b8" stroke-width="0.6"/><path d="M564.0 43.2 h4 l-2 2.2 z" fill="#202020"/><rect x="571.5" y="39.5" width="10" height="8.5" fill="#fafafa" stroke="#5a6a88" stroke-width="0.8"/><path d="M573.5 46.5 l2-5 l2 5 M576 46.5 l3-3 M576 43.5 l3 3" stroke="#303030" stroke-width="0.7" fill="none"/><rect x="586" y="39.5" width="10" height="8.5" fill="#fafafa" stroke="#5a6a88" stroke-width="0.8"/><path d="M588 46.5 l2-5 l2 5 M590.5 46.5 l3-3 M590.5 43.5 l3 3" stroke="#2040c0" stroke-width="0.9" fill="none"/><rect x="600.5" y="39.5" width="10" height="8.5" fill="#f0e8c0" stroke="#6a6a68" stroke-width="0.8"/><path d="M601 42 h9 M601 44.5 h9 M604 40 v8" stroke="#8a8060" stroke-width="0.6"/><rect x="605" y="42.5" width="5" height="5" fill="#e8b830"/><rect x="614.0" y="37.5" width="1" height="13.0" fill="#8d9bb0"/><rect x="615.0" y="37.5" width="1" height="13.0" fill="#f4f7fa"/><rect x="619.5" y="41" width="9" height="7" fill="#f4e8a0" stroke="#8a8a70" stroke-width="0.6"/><path d="M622 38.5 l7 7.5" stroke="#303030" stroke-width="1.4"/><path d="M621 38 l2 1" stroke="#e0b020" stroke-width="1.4"/><rect x="634.0" y="37.5" width="1" height="13.0" fill="#8d9bb0"/><rect x="635.0" y="37.5" width="1" height="13.0" fill="#f4f7fa"/><text x="638.5" y="48" font-size="11" font-weight="bold" fill="#1a3ad0" font-family="Liberation Sans">P</text><rect x="652" y="41.5" width="8" height="5.5" rx="1.5" fill="none" stroke="#8a9a98" stroke-width="1.2"/><circle cx="656" cy="44.2" r="1.2" fill="#8a9a98"/><path d="M666 40 l2 2 l2-2 l2 2 l-1.5 1.5 l1.5 1.5 l-2 2 l-2-1.5 l-2 1.5 l-1-1 l1.5-2 l-1.5-2 z" fill="#1a1a1a"/><circle cx="673" cy="46.5" r="2.5" fill="#e01010"/><path d="M682.5 46 h3.4 M682.5 47.8 h3.4 l-1.7 1.5 z" stroke="#303848" stroke-width="0.7" fill="#303848"/>
<rect x="9.0" y="473.5" width="1.3" height="1.3" fill="#6a7890"/><rect x="9.7" y="474.2" width="1.3" height="1.3" fill="#ffffff" opacity="0.6"/><rect x="9.0" y="476.2" width="1.3" height="1.3" fill="#6a7890"/><rect x="9.7" y="476.9" width="1.3" height="1.3" fill="#ffffff" opacity="0.6"/><rect x="9.0" y="478.9" width="1.3" height="1.3" fill="#6a7890"/><rect x="9.7" y="479.6" width="1.3" height="1.3" fill="#ffffff" opacity="0.6"/><rect x="9.0" y="481.6" width="1.3" height="1.3" fill="#6a7890"/><rect x="9.7" y="482.3" width="1.3" height="1.3" fill="#ffffff" opacity="0.6"/><rect x="13.9" y="474.4" width="9.7" height="9.2" fill="#fbf4d8" stroke="#5a6a88" stroke-width="0.8"/><rect x="14.3" y="474.8" width="8.9" height="2" fill="#3a6ec8"/><circle cx="18.7" cy="479.8" r="2.6" fill="#f4e060" stroke="#c89a20" stroke-width="0.6"/><rect x="28.4" y="474.4" width="9.7" height="8.2" fill="#fff" stroke="#5a6a88" stroke-width="0.8"/><rect x="28.8" y="474.8" width="8.9" height="2" fill="#3a6ec8"/><path d="M33 481 h5 l-2-2 M38 481 l-2 2" stroke="#20a8c8" stroke-width="1.3" fill="none"/><path d="M43 484 l8-7" stroke="#303030" stroke-width="1.6"/><path d="M45 474 l1 1.5 M49 474.5 l-.5 1.5 M43 478 l1.5 .5 M47 481 l1 1" stroke="#e0d020" stroke-width="1.4"/><rect x="57.4" y="474.4" width="10.2" height="9.2" fill="#f8f4e4" stroke="#5a6a88" stroke-width="0.8"/><rect x="57.8" y="474.8" width="9.4" height="2" fill="#3a6ec8"/><path d="M59 483 l7-6" stroke="#803020" stroke-width="1.2"/><circle cx="62" cy="479" r="2" fill="none" stroke="#d8a020" stroke-width="0.9"/><path d="M71.5 479.2 h4 l-2 2.2 z" fill="#202020"/><rect x="78.5" y="472.5" width="1" height="13.0" fill="#8d9bb0"/><rect x="79.5" y="472.5" width="1" height="13.0" fill="#f4f7fa"/><path d="M83.5 478 l4-4 l6.5 5 l-4 4 z" fill="#f0d860" stroke="#202020" stroke-width="1"/><circle cx="101.0" cy="476.8" r="2.4" fill="#f0e020" stroke="#303030" stroke-width="0.7"/><circle cx="106.5" cy="476.8" r="2.4" fill="#f0e020" stroke="#303030" stroke-width="0.7"/><circle cx="101.0" cy="482.0" r="2.4" fill="#f0e020" stroke="#303030" stroke-width="0.7"/><circle cx="106.5" cy="482.0" r="2.4" fill="#f0e020" stroke="#303030" stroke-width="0.7"/><path d="M112.5 479.5 h5 M115 477 v5" stroke="#1a1a1a" stroke-width="1.3"/><circle cx="120.8" cy="479.5" r="2.8" fill="#f0e020" stroke="#303030" stroke-width="0.7"/><path d="M129 476 q2.5-3 5 0 q0 2 -2.5 3 v1" stroke="#1a1a1a" stroke-width="1.3" fill="none"/><circle cx="128.5" cy="483" r="2" fill="none" stroke="#303030" stroke-width="0.9"/><circle cx="135.5" cy="483" r="2" fill="none" stroke="#303030" stroke-width="0.9"/><rect x="141.5" y="474" width="10" height="10" fill="#b8c8f0" stroke="#3040b0" stroke-width="0.9"/><path d="M141.5 474 l10 10 M151.5 474 l-10 10" stroke="#3040b0" stroke-width="0.9"/><circle cx="157.5" cy="482.5" r="2" fill="none" stroke="#a0a8b4" stroke-width="0.9"/><circle cx="164" cy="482.5" r="2" fill="none" stroke="#a0a8b4" stroke-width="0.9"/><path d="M159 480.5 l1.5-5 h1 l1.5 5" stroke="#a0a8b4" stroke-width="0.9" fill="none"/><circle cx="175.5" cy="479.2" r="3.8" fill="#d8d8b8" stroke="#808070" stroke-width="0.6"/><circle cx="175.5" cy="479.2" r="2.4" fill="#8a8210"/><path d="M184.0 479.2 h4 l-2 2.2 z" fill="#202020"/><rect x="191.0" y="472.5" width="1" height="13.0" fill="#8d9bb0"/><rect x="192.0" y="472.5" width="1" height="13.0" fill="#f4f7fa"/><path d="M198 479.2 l2.3-4.2 h5 l2.3 4.2 l-2.3 4.2 h-5 z" fill="none" stroke="#1a3ae0" stroke-width="1.3"/><path d="M212 479.2 l2.3-4.2 h5 l2.3 4.2 l-2.3 4.2 h-5 z" fill="none" stroke="#e8e050" stroke-width="1.3"/><path d="M212 479.2 l2.3 4.2 h5" fill="none" stroke="#1a3ae0" stroke-width="1.3"/><ellipse cx="230" cy="477" rx="4" ry="2.2" fill="none" stroke="#3050c0" stroke-width="1.1"/><ellipse cx="230" cy="481.5" rx="4" ry="2.2" fill="none" stroke="#3050c0" stroke-width="1.1"/><circle cx="227" cy="479" r="1.5" fill="#a0a8b8"/><path d="M240 474.5 l10 9.5 M250 474.5 l-10 9.5 M240 479.2 h10" stroke="#1a1a1a" stroke-width="1.1"/><path d="M240 474.5 h10 M240 484 h10" stroke="#2a40d0" stroke-width="1.2"/><rect x="254.5" y="474.5" width="10" height="9.5" fill="#e8b8b0"/><path d="M254.5 474.5 l10 9.5 M264.5 474.5 l-10 9.5" stroke="#1a1a1a" stroke-width="1.3"/><path d="M254.5 474.5 h10 M254.5 484 h10" stroke="#d02020" stroke-width="1"/><rect x="268.5" y="472.5" width="1" height="13.0" fill="#8d9bb0"/><rect x="269.5" y="472.5" width="1" height="13.0" fill="#f4f7fa"/><path d="M274 483 l5-5" stroke="#2a4ac0" stroke-width="1.2"/><circle cx="274" cy="483" r="1.7" fill="#fff" stroke="#2a4ac0" stroke-width="0.8"/><circle cx="279.5" cy="477" r="2.3" fill="#f0e020" stroke="#808020" stroke-width="0.6"/><path d="M288 475 l9 9 M297 475 l-9 9" stroke="#1a1a1a" stroke-width="1.1"/><path d="M288 479.2 h9" stroke="#2a40d0" stroke-width="1.3"/><circle cx="288" cy="475" r="1.2" fill="#f0e020"/><circle cx="297" cy="475" r="1.2" fill="#f0e020"/><circle cx="288" cy="484" r="1.2" fill="#f0e020"/><circle cx="297" cy="484" r="1.2" fill="#f0e020"/><ellipse cx="306" cy="476.5" rx="3.8" ry="2.2" fill="none" stroke="#e0d830" stroke-width="1.2" transform="rotate(-20 306 476.5)"/><ellipse cx="305" cy="482" rx="3.8" ry="2.2" fill="none" stroke="#303848" stroke-width="1.2"/><ellipse cx="322" cy="476.5" rx="3.8" ry="2.2" fill="none" stroke="#a8b0bc" stroke-width="1" transform="rotate(-20 322 476.5)"/><ellipse cx="321" cy="482" rx="3.8" ry="2.2" fill="none" stroke="#a8b0bc" stroke-width="1"/><rect x="331.0" y="472.5" width="1" height="13.0" fill="#8d9bb0"/><rect x="332.0" y="472.5" width="1" height="13.0" fill="#f4f7fa"/><rect x="335.5" y="474" width="10" height="10" fill="#c8d8f8" stroke="#2040c0" stroke-width="1"/><rect x="338" y="476.5" width="5" height="5" fill="none" stroke="#2040c0" stroke-width="0.8"/><path d="M335.5 474 l2.5 2.5 M345.5 474 l-2.5 2.5 M335.5 484 l2.5-2.5 M345.5 484 l-2.5-2.5" stroke="#2040c0" stroke-width="0.7"/><path d="M355 474 l4.5 5.2 l-4.5 5.2 l-4.5-5.2 z M350.5 479.2 h9 M355 474 v10.4" fill="none" stroke="#8a929e" stroke-width="0.8"/><path d="M364 476 l4 3 l4-3 l1.5 2.5 l-3 1.5 l3 2.5 l-2 1 l-3.5-2 l-3.5 2 l-2-1 l3-2.5 l-3-1.5 z" fill="#d82020" stroke="#c0a020" stroke-width="0.4"/><path d="M378.0 479.2 h4 l-2 2.2 z" fill="#202020"/><circle cx="388" cy="482.5" r="2" fill="#fff" stroke="#8a929e" stroke-width="0.7"/><path d="M389.5 481 l2.5-2.5" stroke="#8a929e" stroke-width="0.8"/><text x="391" y="480" font-size="7.5" fill="#8a929e" font-family="Liberation Sans">Fe</text><rect x="400.0" y="472.5" width="1" height="13.0" fill="#8d9bb0"/><rect x="401.0" y="472.5" width="1" height="13.0" fill="#f4f7fa"/><rect x="404.5" y="474" width="10" height="10" fill="#8090e0" stroke="#2a3ab0" stroke-width="0.8"/><path d="M409.5 475 l3 4.2 l-3 4.2 l-3-4.2 z" fill="#f0e020"/><path d="M405 474.5 l3 3 M414 474.5 l-3 3 M405 483.5 l3-3 M414 483.5 l-3-3" stroke="#1a1a1a" stroke-width="1.3"/><path d="M418.0 479.2 h4 l-2 2.2 z" fill="#202020"/><rect x="425.0" y="472.5" width="1" height="13.0" fill="#8d9bb0"/><rect x="426.0" y="472.5" width="1" height="13.0" fill="#f4f7fa"/><text x="429.5" y="483.8" font-size="11" font-weight="bold" font-style="italic" fill="#1a2aa0" font-family="Liberation Serif">M</text><rect x="445" y="474" width="9.5" height="10" fill="#f4f4f8" stroke="#3050a0" stroke-width="0.9"/><circle cx="450" cy="479.5" r="3" fill="#20a090"/><path d="M446 475 l3 2" stroke="#d03030" stroke-width="1"/><path d="M460 481.5 h3.4 M460 483.3 h3.4 l-1.7 1.5 z" stroke="#303848" stroke-width="0.7" fill="#303848"/><rect x="467.5" y="473.5" width="1.3" height="1.3" fill="#6a7890"/><rect x="468.2" y="474.2" width="1.3" height="1.3" fill="#ffffff" opacity="0.6"/><rect x="467.5" y="476.2" width="1.3" height="1.3" fill="#6a7890"/><rect x="468.2" y="476.9" width="1.3" height="1.3" fill="#ffffff" opacity="0.6"/><rect x="467.5" y="478.9" width="1.3" height="1.3" fill="#6a7890"/><rect x="468.2" y="479.6" width="1.3" height="1.3" fill="#ffffff" opacity="0.6"/><rect x="467.5" y="481.6" width="1.3" height="1.3" fill="#6a7890"/><rect x="468.2" y="482.3" width="1.3" height="1.3" fill="#ffffff" opacity="0.6"/><rect x="470.5" y="471.5" width="13" height="15" fill="#fbe9a8" stroke="#e8c870" stroke-width="0.6"/><path d="M473.5 474 v9 l2-2 l1.8 3.2 l1.2-.6 l-1.6-3 h2.8 z" fill="#fff" stroke="#1a1a1a" stroke-width="0.8"/><g transform="translate(2.7 0)"><path d="M491 474 v10 M486 479.2 h10" stroke="#1a1a1a" stroke-width="1.2"/><path d="M489 476 l2-2.4 l2 2.4 M489 482.4 l2 2.4 l2-2.4 M488.5 477.2 l-2.4 2 l2.4 2 M493.5 477.2 l2.4 2 l-2.4 2" stroke="#1a1a1a" stroke-width="1.1" fill="none"/></g><g transform="translate(5 0)"><path d="M506 477 a3.5 3.5 0 1 1 -2 -1.6" stroke="#1a1a1a" stroke-width="1.6" fill="none"/><path d="M503 474 l2.5 1.5 l-2 2" fill="#1a1a1a"/></g><g transform="translate(7.6 0)"><path d="M514 474 v10 M509 479.2 h10" stroke="#1a1a1a" stroke-width="1.2"/><path d="M512 476 l2-2.4 l2 2.4 M512 482.4 l2 2.4 l2-2.4 M511.5 477.2 l-2.4 2 l2.4 2 M516.5 477.2 l2.4 2 l-2.4 2" stroke="#1a1a1a" stroke-width="1.1" fill="none"/></g><rect x="532" y="476" width="6.5" height="6.5" fill="none" stroke="#1a1a1a" stroke-width="1.1"/><path d="M530 474 l2.5 2.5 M540.5 474 l-2.5 2.5 M530 484.5 l2.5-2.5 M540.5 484.5 l-2.5-2.5" stroke="#1a1a1a" stroke-width="1"/><path d="M557 474.5 l-8 4.7 l8 4.7 M552 478 l1 2.5" stroke="#1a1a1a" stroke-width="1.2" fill="none"/><path d="M561 478 l4-3.5 l4 3.5 M562.5 478 v5.5 h5 v-5.5 M560.5 484 h9" stroke="#1a1a1a" stroke-width="1.1" fill="none"/><circle cx="582.5" cy="479.2" r="3.2" fill="#1a1a1a"/><path d="M578 479.2 h9 M582.5 474.5 v9.5 M579 475.5 l7 7.5 M586 475.5 l-7 7.5" stroke="#1a1a1a" stroke-width="0.9"/><circle cx="582.5" cy="479.2" r="1.2" fill="#fff"/><rect x="592.5" y="474.5" width="6" height="6" fill="#d8dce2" stroke="#a0a8b4" stroke-width="0.7"/><rect x="595" y="478" width="5.5" height="6" fill="#c8ccd2" stroke="#a0a8b4" stroke-width="0.7"/><rect x="606.5" y="474.5" width="6" height="6" fill="#d8dce2" stroke="#a0a8b4" stroke-width="0.7"/><rect x="609" y="478" width="5.5" height="6" fill="#c8ccd2" stroke="#a0a8b4" stroke-width="0.7"/><path d="M620.5 481.5 h3.4 M620.5 483.3 h3.4 l-1.7 1.5 z" stroke="#303848" stroke-width="0.7" fill="#303848"/><rect x="630.0" y="473.5" width="1.3" height="1.3" fill="#6a7890"/><rect x="630.7" y="474.2" width="1.3" height="1.3" fill="#ffffff" opacity="0.6"/><rect x="630.0" y="476.2" width="1.3" height="1.3" fill="#6a7890"/><rect x="630.7" y="476.9" width="1.3" height="1.3" fill="#ffffff" opacity="0.6"/><rect x="630.0" y="478.9" width="1.3" height="1.3" fill="#6a7890"/><rect x="630.7" y="479.6" width="1.3" height="1.3" fill="#ffffff" opacity="0.6"/><rect x="630.0" y="481.6" width="1.3" height="1.3" fill="#6a7890"/><rect x="630.7" y="482.3" width="1.3" height="1.3" fill="#ffffff" opacity="0.6"/><path d="M635.5 474 v10 h10" stroke="#505868" stroke-width="1" fill="none"/><path d="M637.5 477 v6.5 M639.5 476 v7.5 M641.5 477.5 v6 M643.5 476.5 v7" stroke="#606878" stroke-width="1"/><g transform="translate(-2.5 0)"><path d="M657 474 l-4.5 9.5 h9 z M652 484 h10" stroke="#1a1a1a" stroke-width="1" fill="none"/></g><path d="M668 476 v8 h4 v-4 l2-3 M670 474.5 l1 2 M673.5 474.5 l-.5 2" stroke="#1a1a1a" stroke-width="1.1" fill="none"/><g transform="translate(-2.5 0)"><path d="M681 482 l5-6 h4 v3.5 l-5 6 h-4 z" fill="#fff" stroke="#1a1a1a" stroke-width="1"/></g><path d="M694.5 481.5 h3.4 M694.5 483.3 h3.4 l-1.7 1.5 z" stroke="#303848" stroke-width="0.7" fill="#303848"/>
<rect x="258.5" y="77.5" width="9.0" height="8.0" fill="#eef4fc" stroke="#2a4c8c" stroke-width="0.9"/>
<rect x="259.0" y="77.9" width="8.0" height="1.6" fill="#5a88d0" />
<path d="M258.5 76 l.8 1.6 l1.8 .2 l-1.3 1.2 l.3 1.8 l-1.6-.8 l-1.6 .8 l.3-1.8 l-1.3-1.2 l1.8-.2 z" fill="#f6e43c" stroke="none" stroke-width="1" />
<path d="M273.5 80.5 h4 l-2 2 z" fill="#9aa0a8" stroke="none" stroke-width="1" />
<line x1="270.5" y1="75.5" x2="270.5" y2="87.5" stroke="#d4d4d4" stroke-width="0.8" />
<path d="M619.5 78.5 l2.5 2.5 l-2.5 2.5 M623 78.5 l2.5 2.5 l-2.5 2.5" fill="none" stroke="#505050" stroke-width="1" />
<text x="637.7" y="83.0" font-size="8.86" fill="#1a1a1a" textLength="35.8" lengthAdjust="spacingAndGlyphs">Data sheet</text>
<path d="M678 85.5 h3" fill="none" stroke="#9a9a9a" stroke-width="0.8" />
<path d="M944.5 77 L950.5 83 M950.5 77 L944.5 83" fill="none" stroke="#606060" stroke-width="1.3" />
<rect x="945.5" y="89.5" width="9.5" height="233.0" fill="#f0f0f0" />
<path d="M947.5 95.5 h5 l-2.5-2.5 z" fill="#404040" stroke="none" stroke-width="1" />
<rect x="946.0" y="100.5" width="8.5" height="199.0" fill="url(#thumb)" rx="1" stroke="#a8a8a8" stroke-width="0.8"/>
<path d="M948 196 h4 M948 198 h4 M948 200 h4" fill="none" stroke="#808080" stroke-width="0.6" />
<path d="M947.5 316.5 h5 l-2.5 2.5 z" fill="#404040" stroke="none" stroke-width="1" />
<defs><linearGradient id="thumb" x1="0" y1="0" x2="1" y2="0"><stop offset="0" stop-color="#f4f4f4"/><stop offset="1" stop-color="#d8d8d8"/></linearGradient></defs>
<rect x="640.0" y="99.0" width="297.0" height="9.5" fill="#e3e3e3" />
<text x="790.5" y="107.2" font-size="8.42" fill="#000" font-weight="bold" textLength="29.1" lengthAdjust="spacingAndGlyphs" text-anchor="middle">General</text>
<rect x="640.0" y="113.0" width="55.5" height="10.2" fill="#e6e6e6" />
<rect x="640.0" y="123.8" width="55.5" height="9.0" fill="#e6e6e6" />
<text x="642.3" y="121.5" font-size="8.42" fill="#000" font-weight="bold" textLength="23.0" lengthAdjust="spacingAndGlyphs">Origin</text>
<text x="700.3" y="121.5" font-size="8.42" fill="#000" textLength="108.0" lengthAdjust="spacingAndGlyphs">Pearson's Crystal Data: 1125497</text>
<text x="642.3" y="131.5" font-size="8.42" fill="#000" font-weight="bold" textLength="30.8" lengthAdjust="spacingAndGlyphs">Formula</text>
<text x="700.3" y="131.5" font-size="8.42" fill="#000" textLength="18.5" lengthAdjust="spacingAndGlyphs">V2O3</text>
<rect x="640.0" y="144.5" width="297.0" height="9.5" fill="#e3e3e3" />
<text x="790.5" y="152.7" font-size="8.42" fill="#000" font-weight="bold" textLength="68.1" lengthAdjust="spacingAndGlyphs" text-anchor="middle">Bibliographic data</text>
<rect x="640.0" y="158.7" width="55.5" height="9.0" fill="#e6e6e6" />
<rect x="640.0" y="168.5" width="55.5" height="19.4" fill="#e6e6e6" />
<rect x="640.0" y="188.5" width="55.5" height="10.0" fill="#e6e6e6" />
<text x="642.3" y="166.5" font-size="8.42" fill="#000" font-weight="bold" textLength="35.1" lengthAdjust="spacingAndGlyphs">Author(s)</text>
<text x="700.3" y="166.5" font-size="8.42" fill="#000" textLength="200.0" lengthAdjust="spacingAndGlyphs">Varga T., Mitchell J.F., Yamaura K., Mandrus D.G., Wang J.</text>
<text x="642.3" y="177.2" font-size="8.42" fill="#000" font-weight="bold" textLength="42.1" lengthAdjust="spacingAndGlyphs">Publication</text>
<text x="700.3" y="177.2" font-size="8.42" fill="#000" textLength="228.0" lengthAdjust="spacingAndGlyphs">A Ca substitution study of NaV2O4: high-pressure synthesis of the</text>
<text x="642.3" y="186.7" font-size="8.42" fill="#000" font-weight="bold" textLength="13.9" lengthAdjust="spacingAndGlyphs">title</text>
<text x="700.3" y="186.7" font-size="8.42" fill="#000" textLength="100.0" lengthAdjust="spacingAndGlyphs">Na1-xCaxV2O4 solid solution</text>
<text x="642.3" y="197.3" font-size="8.42" fill="#000" font-weight="bold" textLength="29.0" lengthAdjust="spacingAndGlyphs">Citation</text>
<text x="700.3" y="197.3" font-size="8.42" fill="#000" textLength="90.9" lengthAdjust="spacingAndGlyphs">SSSCFS, 11, 694-699 (2009)</text>
<rect x="640.0" y="210.4" width="297.0" height="9.4" fill="#e3e3e3" />
<text x="790.5" y="218.5" font-size="8.42" fill="#000" font-weight="bold" textLength="41.2" lengthAdjust="spacingAndGlyphs" text-anchor="middle">Phase data</text>
<rect x="640.0" y="224.2" width="55.0" height="9.6" fill="#e6e6e6" />
<rect x="640.0" y="234.5" width="55.0" height="31.7" fill="#e6e6e6" />
<text x="642.3" y="232.7" font-size="8.42" fill="#000" font-weight="bold" textLength="47.7" lengthAdjust="spacingAndGlyphs">Space-group</text>
<text x="700.0" y="232.7" font-size="8.42" fill="#000" textLength="73.3" lengthAdjust="spacingAndGlyphs">R -3 c (167) - trigonal</text>
<text x="642.3" y="254.5" font-size="8.42" fill="#000" font-weight="bold" textLength="14.3" lengthAdjust="spacingAndGlyphs">Cell</text>
<text x="700.0" y="242.7" font-size="8.42" fill="#000" textLength="101.0" lengthAdjust="spacingAndGlyphs">a=4.9504(0) Å c=13.9930(2) Å</text>
<text x="700.0" y="253.0" font-size="8.42" fill="#000" textLength="38.2" lengthAdjust="spacingAndGlyphs">c/a=2.8267</text>
<text x="700.0" y="264.4" font-size="8.42" fill="#000" textLength="48.1" lengthAdjust="spacingAndGlyphs">V=296.97(1) Å</text>
<text x="748.8" y="260.9" font-size="6" fill="#000">3</text>
<rect x="640.0" y="278.5" width="185.2" height="9.6" fill="#e3e3e3" />
<text x="734.6" y="286.8" font-size="8.42" fill="#000" font-weight="bold" textLength="70.7" lengthAdjust="spacingAndGlyphs" text-anchor="middle">Atomic parameters</text>
<rect x="640.0" y="292.6" width="23.0" height="11.1" fill="#e6e6e6" />
<text x="651.5" y="302.0" font-size="8.42" fill="#000" font-weight="bold" textLength="19.9" lengthAdjust="spacingAndGlyphs" text-anchor="middle">Atom</text>
<rect x="664.0" y="292.6" width="15.0" height="11.1" fill="#e6e6e6" />
<text x="671.5" y="302.0" font-size="8.42" fill="#000" font-weight="bold" textLength="12.6" lengthAdjust="spacingAndGlyphs" text-anchor="middle">Ox.</text>
<rect x="680.0" y="292.6" width="24.0" height="11.1" fill="#e6e6e6" />
<text x="692.0" y="302.0" font-size="8.42" fill="#000" font-weight="bold" textLength="22.4" lengthAdjust="spacingAndGlyphs" text-anchor="middle">Wyck.</text>
<rect x="705.0" y="292.6" width="17.0" height="11.1" fill="#e6e6e6" />
<text x="713.5" y="302.0" font-size="8.42" fill="#000" font-weight="bold" textLength="14.3" lengthAdjust="spacingAndGlyphs" text-anchor="middle">Site</text>
<rect x="723.0" y="292.6" width="30.0" height="11.1" fill="#e6e6e6" />
<text x="738.0" y="302.0" font-size="8.42" fill="#000" font-weight="bold" textLength="10.9" lengthAdjust="spacingAndGlyphs" text-anchor="middle">x/a</text>
<rect x="754.0" y="292.6" width="14.0" height="11.1" fill="#e6e6e6" />
<text x="761.0" y="302.0" font-size="8.42" fill="#000" font-weight="bold" textLength="11.3" lengthAdjust="spacingAndGlyphs" text-anchor="middle">y/b</text>
<rect x="769.0" y="292.6" width="29.0" height="11.1" fill="#e6e6e6" />
<text x="783.5" y="302.0" font-size="8.42" fill="#000" font-weight="bold" textLength="10.4" lengthAdjust="spacingAndGlyphs" text-anchor="middle">z/c</text>
<rect x="799.3" y="292.6" width="25.9" height="11.1" fill="#e6e6e6" />
<text x="812.2" y="302.0" font-size="8.42" fill="#000" font-weight="bold" textLength="23.0" lengthAdjust="spacingAndGlyphs" text-anchor="middle">U [Å  ]</text>
<text x="817.5" y="298.2" font-size="5.4" fill="#000" font-weight="bold" textLength="2.8" lengthAdjust="spacingAndGlyphs">2</text>
<svg x="632" y="89" width="313" height="234" viewBox="632 89 313 234">
<text x="644.8" y="313.1" font-size="8.42" fill="#000" textLength="6.1" lengthAdjust="spacingAndGlyphs">O</text>
<text x="668.0" y="313.1" font-size="8.42" fill="#000" textLength="4.3" lengthAdjust="spacingAndGlyphs">0</text>
<text x="681.6" y="313.1" font-size="8.42" fill="#000" textLength="13.0" lengthAdjust="spacingAndGlyphs">18e</text>
<text x="709.0" y="313.1" font-size="8.42" fill="#000" textLength="6.5" lengthAdjust="spacingAndGlyphs">.2</text>
<text x="727.0" y="313.1" font-size="8.42" fill="#000" textLength="24.5" lengthAdjust="spacingAndGlyphs">0.30618</text>
<text x="756.8" y="313.1" font-size="8.42" fill="#000" textLength="4.3" lengthAdjust="spacingAndGlyphs">0</text>
<text x="772.0" y="313.1" font-size="8.42" fill="#000" textLength="10.9" lengthAdjust="spacingAndGlyphs">1/4</text>
<text x="825.0" y="313.1" font-size="8.42" fill="#000" textLength="22.0" lengthAdjust="spacingAndGlyphs" text-anchor="end">0.0003</text>
<text x="644.8" y="324.0" font-size="8.42" fill="#000" textLength="5.2" lengthAdjust="spacingAndGlyphs">V</text>
<text x="668.0" y="324.0" font-size="8.42" fill="#000" textLength="4.3" lengthAdjust="spacingAndGlyphs">0</text>
<text x="681.6" y="324.0" font-size="8.42" fill="#000" textLength="12.6" lengthAdjust="spacingAndGlyphs">12c</text>
<text x="709.0" y="324.0" font-size="8.42" fill="#000" textLength="6.5" lengthAdjust="spacingAndGlyphs">3.</text>
<text x="727.0" y="324.0" font-size="8.42" fill="#000" textLength="4.3" lengthAdjust="spacingAndGlyphs">0</text>
<text x="756.8" y="324.0" font-size="8.42" fill="#000" textLength="4.3" lengthAdjust="spacingAndGlyphs">0</text>
<text x="772.0" y="324.0" font-size="8.42" fill="#000" textLength="24.5" lengthAdjust="spacingAndGlyphs">0.14783</text>
<text x="825.0" y="324.0" font-size="8.42" fill="#000" textLength="22.0" lengthAdjust="spacingAndGlyphs" text-anchor="end">0.0003</text>
</svg>
<text x="637.6" y="335.5" font-size="8.86" fill="#1a1a1a" textLength="35.5" lengthAdjust="spacingAndGlyphs">Properties</text>
<path d="M944.5 329 L950.5 335 M950.5 329 L944.5 335" fill="none" stroke="#606060" stroke-width="1.3" />
<text x="637.6" y="349.4" font-size="8.64" fill="#1a1a1a" textLength="80.0" lengthAdjust="spacingAndGlyphs">Structure picture contents</text>
<path d="M946 346.5 h5 l-2.5 2.5 z" fill="#1a1a1a" stroke="none" stroke-width="1" />
<defs><linearGradient id="phdr" x1="0" y1="0" x2="0" y2="1"><stop offset="0" stop-color="#ffffff"/><stop offset="1" stop-color="#e6e6e6"/></linearGradient></defs>
<rect x="633.0" y="355.5" width="312.0" height="14.0" fill="url(#phdr)" />
<line x1="886.5" y1="355.5" x2="886.5" y2="470.0" stroke="#ececec" stroke-width="1" />
<line x1="912.6" y1="355.5" x2="912.6" y2="470.0" stroke="#ececec" stroke-width="1" />
<line x1="938.3" y1="355.5" x2="938.3" y2="470.0" stroke="#ececec" stroke-width="1" />
<text x="636.8" y="379.5" font-size="8.42" fill="#1a1a1a" textLength="111.0" lengthAdjust="spacingAndGlyphs">Atomic parameters (asym. sites)</text>
<text x="908.0" y="379.5" font-size="8.42" fill="#1a1a1a" textLength="4.3" lengthAdjust="spacingAndGlyphs" text-anchor="end">2</text>
<text x="934.0" y="379.5" font-size="8.42" fill="#1a1a1a" textLength="9.5" lengthAdjust="spacingAndGlyphs" text-anchor="end">(2)</text>
<line x1="633.0" y1="382.6" x2="945.0" y2="382.6" stroke="#eeeeee" stroke-width="1" />
<text x="636.8" y="391.9" font-size="8.42" fill="#1a1a1a" textLength="63.1" lengthAdjust="spacingAndGlyphs">Symmetry records</text>
<text x="908.0" y="391.9" font-size="8.42" fill="#1a1a1a" textLength="8.7" lengthAdjust="spacingAndGlyphs" text-anchor="end">12</text>
<line x1="633.0" y1="395.1" x2="945.0" y2="395.1" stroke="#eeeeee" stroke-width="1" />
<text x="636.8" y="404.4" font-size="8.42" fill="#1a1a1a" textLength="61.4" lengthAdjust="spacingAndGlyphs">Atoms in unit cell</text>
<text x="908.0" y="404.4" font-size="8.42" fill="#1a1a1a" textLength="8.7" lengthAdjust="spacingAndGlyphs" text-anchor="end">30</text>
<line x1="633.0" y1="407.5" x2="945.0" y2="407.5" stroke="#eeeeee" stroke-width="1" />
<text x="636.8" y="416.9" font-size="8.42" fill="#1a1a1a" textLength="180.0" lengthAdjust="spacingAndGlyphs">Bond parameters (non-bonding contacts, H-bonds)</text>
<text x="908.0" y="416.9" font-size="8.42" fill="#1a1a1a" textLength="4.3" lengthAdjust="spacingAndGlyphs" text-anchor="end">0</text>
<text x="934.0" y="416.9" font-size="8.42" fill="#1a1a1a" textLength="18.2" lengthAdjust="spacingAndGlyphs" text-anchor="end">(0, 0)</text>
<line x1="633.0" y1="420.0" x2="945.0" y2="420.0" stroke="#eeeeee" stroke-width="1" />
<text x="636.8" y="429.3" font-size="8.42" fill="#1a1a1a" textLength="122.1" lengthAdjust="spacingAndGlyphs">Molecular units (mol./polym. sites)</text>
<text x="908.0" y="429.3" font-size="8.42" fill="#1a1a1a" textLength="4.3" lengthAdjust="spacingAndGlyphs" text-anchor="end">1</text>
<text x="934.0" y="429.3" font-size="8.42" fill="#1a1a1a" textLength="18.2" lengthAdjust="spacingAndGlyphs" text-anchor="end">(0, 2)</text>
<line x1="633.0" y1="432.4" x2="945.0" y2="432.4" stroke="#eeeeee" stroke-width="1" />
<text x="636.8" y="441.8" font-size="8.42" fill="#1a1a1a" textLength="50.8" lengthAdjust="spacingAndGlyphs">Created atoms</text>
<text x="908.0" y="441.8" font-size="8.42" fill="#1a1a1a" textLength="8.7" lengthAdjust="spacingAndGlyphs" text-anchor="end">46</text>
<line x1="633.0" y1="444.9" x2="945.0" y2="444.9" stroke="#eeeeee" stroke-width="1" />
<text x="636.8" y="454.2" font-size="8.42" fill="#1a1a1a" textLength="122.1" lengthAdjust="spacingAndGlyphs">Created bonds (H-bonds/contacts)</text>
<text x="908.0" y="454.2" font-size="8.42" fill="#1a1a1a" textLength="8.7" lengthAdjust="spacingAndGlyphs" text-anchor="end">66</text>
<text x="934.0" y="454.2" font-size="8.42" fill="#1a1a1a" textLength="18.2" lengthAdjust="spacingAndGlyphs" text-anchor="end">(0, 0)</text>
<line x1="633.0" y1="457.3" x2="945.0" y2="457.3" stroke="#eeeeee" stroke-width="1" />
<text x="636.8" y="466.6" font-size="8.42" fill="#1a1a1a" textLength="105.0" lengthAdjust="spacingAndGlyphs">Created molecules (complete)</text>
<text x="908.0" y="466.6" font-size="8.42" fill="#1a1a1a" textLength="4.3" lengthAdjust="spacingAndGlyphs" text-anchor="end">0</text>
<text x="934.0" y="466.6" font-size="8.42" fill="#1a1a1a" textLength="9.5" lengthAdjust="spacingAndGlyphs" text-anchor="end">(0)</text>
<line x1="633.0" y1="469.8" x2="945.0" y2="469.8" stroke="#eeeeee" stroke-width="1" />
<rect x="945.5" y="355.5" width="9.5" height="114.5" fill="#f0f0f0" />
<path d="M947.5 364.5 h5 l-2.5-2.5 z" fill="#404040" stroke="none" stroke-width="1" />
<rect x="946.0" y="368.5" width="8.5" height="32.0" fill="url(#thumb)" rx="1" stroke="#a8a8a8" stroke-width="0.8"/>
<path d="M948 382 h4 M948 384 h4 M948 386 h4" fill="none" stroke="#808080" stroke-width="0.6" />
<path d="M947.5 460.5 h5 l-2.5 2.5 z" fill="#404040" stroke="none" stroke-width="1" />
<rect x="136.2" y="454.2" width="9.5" height="14.5" fill="#f4f4f4" stroke="#b4b4b4" stroke-width="0.9"/>
<path d="M138.2 460.2 h5.6 l-2.8-2.9 z" fill="#8a8a8a" stroke="none" stroke-width="1" />
<path d="M138.2 463.4 h5.6 l-2.8 2.9 z" fill="#8a8a8a" stroke="none" stroke-width="1" />
<rect x="147.2" y="454.2" width="14.5" height="14.8" fill="#efefef" stroke="#c6c6c6" stroke-width="0.9"/>
<path d="M151 459.6 h6.6 v4.8 h-6.6 z M153.2 459.6 v4.8 M155.4 459.6 v4.8 M151 462 h6.6" fill="none" stroke="#8a8a8a" stroke-width="0.8" />
<rect x="163.0" y="454.2" width="438.0" height="14.8" fill="#efefef" stroke="#c6c6c6" stroke-width="0.9"/>
<line x1="602.0" y1="454.2" x2="602.0" y2="469.0" stroke="#c6c6c6" stroke-width="0.9" />
<path d="M608.8 461.3 l3-2.8 v5.6 z" fill="#9a9a9a" stroke="none" stroke-width="1" />
<path d="M621 458.5 l3 2.8 l-3 2.8 z" fill="#9a9a9a" stroke="none" stroke-width="1" />
<text x="7.5" y="497.5" font-size="8.8" fill="#f2f5f8" textLength="60.7" lengthAdjust="spacingAndGlyphs">For Help, press F1</text>
<line x1="454.9" y1="489.5" x2="454.9" y2="499.5" stroke="#a8b4c8" stroke-width="0.9" />
<line x1="522.4" y1="489.5" x2="522.4" y2="499.5" stroke="#a8b4c8" stroke-width="0.9" />
<line x1="540.0" y1="489.5" x2="540.0" y2="499.5" stroke="#a8b4c8" stroke-width="0.9" />
<line x1="558.4" y1="489.5" x2="558.4" y2="499.5" stroke="#a8b4c8" stroke-width="0.9" />
<line x1="577.5" y1="489.5" x2="577.5" y2="499.5" stroke="#a8b4c8" stroke-width="0.9" />
<line x1="690.8" y1="489.5" x2="690.8" y2="499.5" stroke="#a8b4c8" stroke-width="0.9" />
<line x1="719.5" y1="489.5" x2="719.5" y2="499.5" stroke="#a8b4c8" stroke-width="0.9" />
<line x1="766.5" y1="489.5" x2="766.5" y2="499.5" stroke="#a8b4c8" stroke-width="0.9" />
<line x1="813.0" y1="489.5" x2="813.0" y2="499.5" stroke="#a8b4c8" stroke-width="0.9" />
<line x1="860.2" y1="489.5" x2="860.2" y2="499.5" stroke="#a8b4c8" stroke-width="0.9" />
<line x1="902.5" y1="489.5" x2="902.5" y2="499.5" stroke="#a8b4c8" stroke-width="0.9" />
<text x="562.7" y="497.1" font-size="8.8" fill="#f2f5f8" textLength="12.6" lengthAdjust="spacingAndGlyphs">Blar</text>
<rect x="579.0" y="489.6" width="67.0" height="9.8" fill="#c5cfdc" />
<text x="580.9" y="497.1" font-size="8.8" fill="#1a1a1a" textLength="25.7" lengthAdjust="spacingAndGlyphs">Manual</text>
<text x="649.6" y="497.1" font-size="8.8" fill="#f2f5f8" textLength="40.0" lengthAdjust="spacingAndGlyphs">N. 1.22389 ‹</text>
<text x="723.2" y="497.1" font-size="8.8" fill="#f2f5f8" textLength="26.0" lengthAdjust="spacingAndGlyphs">2 parms</text>
<text x="769.5" y="497.1" font-size="8.8" fill="#f2f5f8" textLength="29.5" lengthAdjust="spacingAndGlyphs">46 atoms</text>
<text x="816.5" y="497.1" font-size="8.8" fill="#f2f5f8" textLength="30.0" lengthAdjust="spacingAndGlyphs">66 bonds</text>
<text x="864.0" y="497.1" font-size="8.8" fill="#f2f5f8" textLength="34.0" lengthAdjust="spacingAndGlyphs">polymeric</text>
<text x="905.5" y="497.1" font-size="8.8" fill="#f2f5f8" textLength="26.0" lengthAdjust="spacingAndGlyphs">0 polyh.</text>
<rect x="953.9" y="491.7" width="1.3" height="1.3" fill="#d4dce8" />
<rect x="953.9" y="493.8" width="1.3" height="1.3" fill="#d4dce8" />
<rect x="951.9" y="493.8" width="1.3" height="1.3" fill="#d4dce8" />
<rect x="953.9" y="495.8" width="1.3" height="1.3" fill="#d4dce8" />
<rect x="951.9" y="495.8" width="1.3" height="1.3" fill="#d4dce8" />
<rect x="949.8" y="495.8" width="1.3" height="1.3" fill="#d4dce8" />
<rect x="953.9" y="497.9" width="1.3" height="1.3" fill="#d4dce8" />
<rect x="951.9" y="497.9" width="1.3" height="1.3" fill="#d4dce8" />
<rect x="949.8" y="497.9" width="1.3" height="1.3" fill="#d4dce8" />
<rect x="947.8" y="497.9" width="1.3" height="1.3" fill="#d4dce8" />
</svg>
<div class="a" id="fborder"></div>
</body></html>
